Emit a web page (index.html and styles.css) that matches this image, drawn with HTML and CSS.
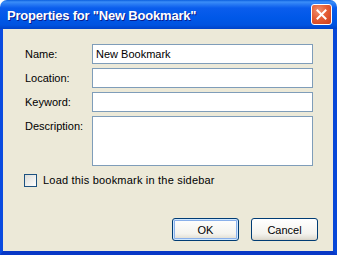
FILE: index.html
```
<!DOCTYPE html>
<html lang="en">
<head>
  <meta charset="UTF-8" />
  <meta name="viewport" content="width=device-width, initial-scale=1.0" />
  <title>Properties for "New Bookmark"</title>
  <link rel="stylesheet" href="styles.css">
</head>
<body>
  <div class="window">
    <div class="titlebar">
      <div class="title">Properties for "New Bookmark"</div>
      <button class="close-btn" aria-label="Close">
        <svg width="11" height="11" viewBox="0 0 11 11">
          <path d="M1.5 1.5 L9.5 9.5 M9.5 1.5 L1.5 9.5" stroke="#fff" stroke-width="2" stroke-linecap="square" />
        </svg>
      </button>
    </div>

    <div class="client">
      <div class="form-grid">
        <label class="field-label" for="name">Name:</label>
        <input class="field" id="name" type="text" value="New Bookmark">

        <label class="field-label" for="location">Location:</label>
        <input class="field" id="location" type="text">

        <label class="field-label" for="keyword">Keyword:</label>
        <input class="field" id="keyword" type="text">

        <label class="field-label" for="description">Description:</label>
        <textarea class="field field-area" id="description"></textarea>
      </div>

      <label class="check-row">
        <span class="checkbox"></span>
        <span>Load this bookmark in the sidebar</span>
      </label>

      <div class="button-row">
        <button class="dlg-btn default">OK</button>
        <button class="dlg-btn">Cancel</button>
      </div>
    </div>
  </div>
</body>
</html>
```

FILE: styles.css
```
body {
  margin: 0;
  background: #fff;
  font-family: 'Liberation Sans', Arial, sans-serif;
  font-size: 11px;
  color: #000;
}

.window {
  width: 337px;
  height: 255px;
  display: flex;
  flex-direction: column;
}

.titlebar {
  height: 29px;
  flex: none;
  display: flex;
  align-items: center;
  justify-content: space-between;
  padding: 0 5px 0 7px;
  border-radius: 7px 7px 0 0;
  background: linear-gradient(#0A5FDE 0, #3B8EF8 2px, #2A7CF4 4px, #0A5DED 8px, #0058E8 18px, #0053E0 25px, #0042C8 29px);
}

.title {
  color: #fff;
  font-weight: bold;
  font-size: 13px;
  letter-spacing: -0.2px;
  text-shadow: 1px 1px 0 #0A1C8C;
  padding-top: 1px;
}

.close-btn {
  width: 21px;
  height: 21px;
  padding: 0;
  border: 1px solid #fff;
  border-radius: 3px;
  background: radial-gradient(circle at 35% 30%, #F09070 0, #E55E35 45%, #CC3C1C 100%);
  display: flex;
  align-items: center;
  justify-content: center;
}

.client {
  flex: 1;
  display: flex;
  flex-direction: column;
  background: #ECE9D8;
  border-left: 3px solid #0A4BE0;
  border-right: 4px solid #0747D8;
  border-bottom: 4px solid #0838C6;
  padding: 15px 15px 10px 22px;
}

.form-grid {
  display: grid;
  grid-template-columns: 67px 221px;
  grid-template-rows: 20px 20px 20px 50px;
  row-gap: 4px;
}

.field-label {
  line-height: 20px;
  white-space: nowrap;
}

.field {
  box-sizing: border-box;
  width: 221px;
  height: 20px;
  margin: 0;
  padding: 0 3px;
  border: 1px solid #7F9DB9;
  background: #fff;
  font-family: 'Liberation Sans', Arial, sans-serif;
  font-size: 11px;
  color: #000;
  outline: none;
}

.field-area {
  height: 50px;
  resize: none;
}

.check-row {
  display: flex;
  align-items: center;
  gap: 6px;
  margin: 7px 0 0 -1px;
  line-height: 15px;
  letter-spacing: 0.2px;
}

.checkbox {
  box-sizing: border-box;
  width: 13px;
  height: 13px;
  border: 1px solid #1C5180;
  background: linear-gradient(135deg, #DCDCD7, #FFFFFF);
}

.button-row {
  margin-top: auto;
  display: flex;
  justify-content: flex-end;
  gap: 12px;
}

.dlg-btn {
  width: 67px;
  height: 23px;
  padding: 0;
  border: 1px solid #003C74;
  border-radius: 3px;
  background: linear-gradient(#FFFFFF, #F4F3EE 70%, #E3E0D6 92%, #D6D0C5);
  font-family: 'Liberation Sans', Arial, sans-serif;
  font-size: 11px;
  color: #000;
}

.dlg-btn.default {
  box-shadow: inset 0 0 0 1px #CEE7FF, inset 0 0 0 2px #8AB0EA;
}
```
